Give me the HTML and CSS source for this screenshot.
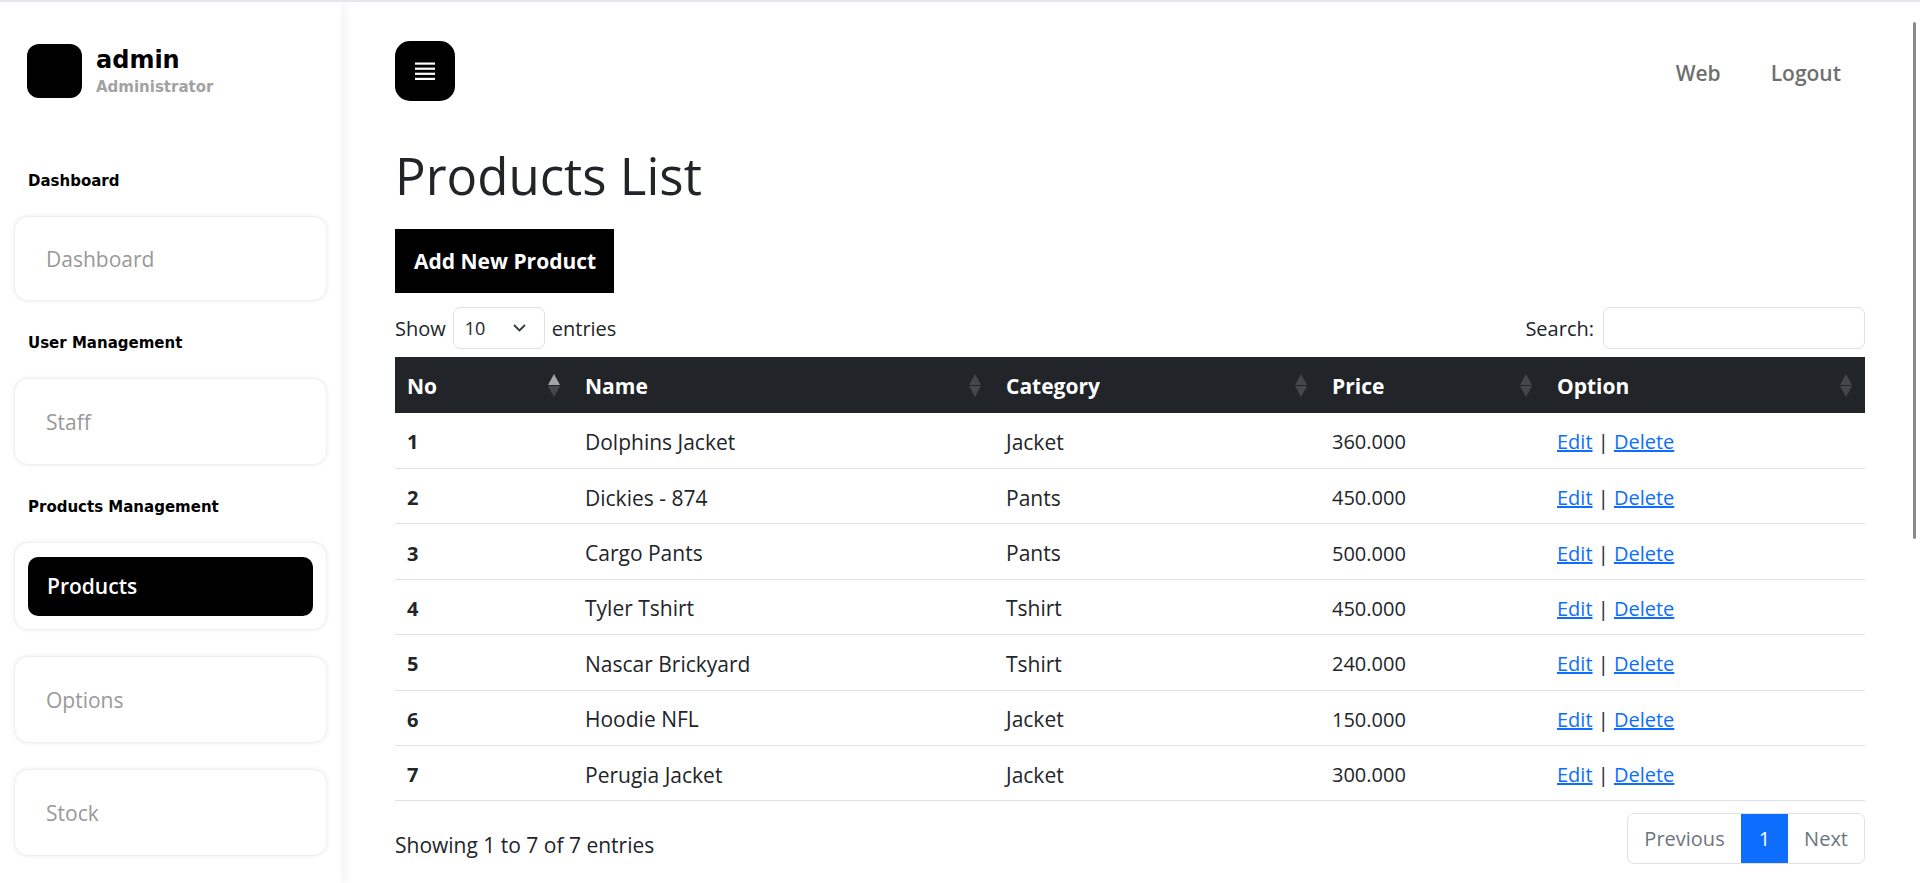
FILE: index.html
```html
<!DOCTYPE html>
<html lang="en">
<head>
<meta charset="utf-8">
<title>Products List</title>
<link rel="stylesheet" href="styles.css">
</head>
<body>
<aside class="sidebar">
  <div class="profile">
    <div class="avatar"></div>
    <div class="profile-text">
      <div class="name">admin</div>
      <div class="role">Administrator</div>
    </div>
  </div>

  <div class="menu-title first">Dashboard</div>
  <a class="menu-card tall" href="#">Dashboard</a>

  <div class="menu-title">User Management</div>
  <a class="menu-card" href="#">Staff</a>

  <div class="menu-title">Products Management</div>
  <div class="menu-card active-card"><a class="active-link" href="#">Products</a></div>
  <a class="menu-card" href="#">Options</a>
  <a class="menu-card" href="#">Stock</a>
</aside>

<main class="main">
  <header class="topbar">
    <button class="menu-btn" type="button" aria-label="Menu">
      <svg width="20" height="18" viewBox="0 0 20 18" aria-hidden="true">
        <rect x="0" y="0.5" width="20" height="2.2" fill="#fff"/>
        <rect x="0" y="5.6" width="20" height="2.2" fill="#fff"/>
        <rect x="0" y="10.7" width="20" height="2.2" fill="#fff"/>
        <rect x="0" y="15.8" width="20" height="2.2" fill="#fff"/>
      </svg>
    </button>
    <nav class="nav">
      <a href="#">Web</a>
      <a href="#">Logout</a>
    </nav>
  </header>

  <h1 class="page-title">Products List</h1>
  <div><a class="btn-add" href="#">Add New Product</a></div>

  <div class="dt-top">
    <div class="dt-length">
      <span>Show</span>
      <div class="select">
        <span>10</span>
        <svg width="13" height="8" viewBox="0 0 13 8" aria-hidden="true"><path d="M1 1l5.5 5.5L12 1" fill="none" stroke="#343a40" stroke-width="1.8"/></svg>
      </div>
      <span>entries</span>
    </div>
    <div class="dt-search">
      <span>Search:</span>
      <div class="input"></div>
    </div>
  </div>

  <table class="table">
    <colgroup>
      <col class="c-no"><col class="c-name"><col class="c-cat"><col class="c-price"><col class="c-opt">
    </colgroup>
    <thead>
      <tr>
        <th><div class="th-in">No<svg class="sort" width="12" height="23" viewBox="0 0 12 23"><polygon points="6,0 12,11 0,11" class="up-on"/><polygon points="0,12 12,12 6,23" class="off"/></svg></div></th>
        <th><div class="th-in">Name<svg class="sort" width="12" height="23" viewBox="0 0 12 23"><polygon points="6,0 12,11 0,11" class="off"/><polygon points="0,12 12,12 6,23" class="off"/></svg></div></th>
        <th><div class="th-in">Category<svg class="sort" width="12" height="23" viewBox="0 0 12 23"><polygon points="6,0 12,11 0,11" class="off"/><polygon points="0,12 12,12 6,23" class="off"/></svg></div></th>
        <th><div class="th-in">Price<svg class="sort" width="12" height="23" viewBox="0 0 12 23"><polygon points="6,0 12,11 0,11" class="off"/><polygon points="0,12 12,12 6,23" class="off"/></svg></div></th>
        <th><div class="th-in">Option<svg class="sort" width="12" height="23" viewBox="0 0 12 23"><polygon points="6,0 12,11 0,11" class="off"/><polygon points="0,12 12,12 6,23" class="off"/></svg></div></th>
      </tr>
    </thead>
    <tbody>
      <tr><td class="num">1</td><td>Dolphins Jacket</td><td>Jacket</td><td class="price">360.000</td><td class="opt"><a href="#">Edit</a> | <a href="#">Delete</a></td></tr>
      <tr><td class="num">2</td><td>Dickies - 874</td><td>Pants</td><td class="price">450.000</td><td class="opt"><a href="#">Edit</a> | <a href="#">Delete</a></td></tr>
      <tr><td class="num">3</td><td>Cargo Pants</td><td>Pants</td><td class="price">500.000</td><td class="opt"><a href="#">Edit</a> | <a href="#">Delete</a></td></tr>
      <tr><td class="num">4</td><td>Tyler Tshirt</td><td>Tshirt</td><td class="price">450.000</td><td class="opt"><a href="#">Edit</a> | <a href="#">Delete</a></td></tr>
      <tr><td class="num">5</td><td>Nascar Brickyard</td><td>Tshirt</td><td class="price">240.000</td><td class="opt"><a href="#">Edit</a> | <a href="#">Delete</a></td></tr>
      <tr><td class="num">6</td><td>Hoodie NFL</td><td>Jacket</td><td class="price">150.000</td><td class="opt"><a href="#">Edit</a> | <a href="#">Delete</a></td></tr>
      <tr><td class="num">7</td><td>Perugia Jacket</td><td>Jacket</td><td class="price">300.000</td><td class="opt"><a href="#">Edit</a> | <a href="#">Delete</a></td></tr>
    </tbody>
  </table>

  <div class="dt-bottom">
    <div class="dt-info">Showing 1 to 7 of 7 entries</div>
    <div class="pagination">
      <span class="page">Previous</span>
      <span class="page active">1</span>
      <span class="page">Next</span>
    </div>
  </div>
</main>

<div class="scroll-thumb"></div>
</body>
</html>
```
FILE: styles.css
```css
* { box-sizing: border-box; }

html, body { margin: 0; padding: 0; }

body {
  width: 1920px;
  height: 883px;
  overflow: hidden;
  border-top: 2px solid #e3e6ea;
  display: flex;
  font-family: "Open Sans", "Noto Sans", sans-serif;
  font-size: 20px;
  color: #212529;
  background: #fff;
}

/* ---------- sidebar ---------- */
.sidebar {
  width: 341px;
  flex: none;
  background: #fff;
  box-shadow: 3px 0 12px rgba(0, 0, 0, 0.06);
  padding: 42px 14px 0 14px;
  display: flex;
  flex-direction: column;
  position: relative;
  z-index: 1;
}

.profile {
  display: flex;
  gap: 14px;
  padding-left: 13px;
}

.avatar {
  width: 55px;
  height: 54px;
  border-radius: 12px;
  background: #000;
  flex: none;
}

.profile-text { padding-top: 3px; }

.name {
  font-family: "DejaVu Sans", sans-serif;
  font-weight: 700;
  font-size: 24px;
  line-height: 26px;
  color: #000;
}

.role {
  font-family: "DejaVu Sans", sans-serif;
  font-weight: 700;
  font-size: 15px;
  line-height: 18px;
  color: #a2a2a2;
  margin-top: 5px;
}

.menu-title {
  font-family: "DejaVu Sans", sans-serif;
  font-weight: 700;
  font-size: 15px;
  line-height: 20px;
  color: #000;
  padding-left: 14px;
  margin-top: 32px;
}

.menu-title.first { margin-top: 73px; }

.menu-card {
  height: 87px;
  margin-top: 25px;
  border-radius: 14px;
  border: 1px solid #f0f0f0;
  box-shadow: 0 0 4px rgba(0, 0, 0, 0.08);
  display: flex;
  align-items: center;
  padding-left: 31px;
  font-size: 21px;
  color: #999;
  text-decoration: none;
  background: #fff;
}

.menu-card.tall { height: 85px; margin-top: 25px; }
.menu-card + .menu-card { margin-top: 26px; }

.menu-card.active-card {
  height: 88px;
  padding: 14px 13px;
}

.active-link {
  flex: 1;
  height: 59px;
  border-radius: 10px;
  background: #000;
  color: #fff;
  display: flex;
  align-items: center;
  padding-left: 19px;
  text-decoration: none;
  font-weight: 600;
}

/* ---------- main ---------- */
.main {
  flex: 1;
  min-width: 0;
  padding: 39px 55px 0 54px;
}

.topbar {
  display: flex;
  justify-content: space-between;
  align-items: center;
  height: 60px;
}

.menu-btn {
  width: 60px;
  height: 60px;
  border-radius: 15px;
  background: #000;
  border: 0;
  padding: 0;
  display: flex;
  align-items: center;
  justify-content: center;
}

.nav {
  display: flex;
  gap: 2px;
  padding-top: 4px;
}

.nav a {
  padding: 0 24px;
  font-weight: 600;
  font-size: 21px;
  color: #6f6f6f;
  text-decoration: none;
}

.page-title {
  font-weight: 400;
  font-size: 51px;
  line-height: 62px;
  margin: 43px 0 23px;
  color: #212529;
}

.btn-add {
  display: inline-flex;
  align-items: center;
  height: 64px;
  padding: 0 18px 0 19px;
  background: #000;
  color: #fff;
  font-weight: 700;
  font-size: 21px;
  text-decoration: none;
}

.dt-top {
  display: flex;
  justify-content: space-between;
  align-items: center;
  margin-top: 14px;
  height: 42px;
}

.dt-length, .dt-search {
  display: flex;
  align-items: center;
}

.dt-length { gap: 7px; }
.dt-search { gap: 9px; }

.select {
  width: 92px;
  height: 42px;
  border: 1px solid #dee2e6;
  border-radius: 7px;
  display: flex;
  align-items: center;
  justify-content: space-between;
  padding: 0 18px 0 11px;
  font-size: 18px;
}

.input {
  width: 262px;
  height: 42px;
  border: 1px solid #dee2e6;
  border-radius: 7px;
}

/* ---------- table ---------- */
.table {
  width: 100%;
  margin-top: 8px;
  border-collapse: collapse;
  table-layout: fixed;
}

.c-no { width: 178px; }
.c-name { width: 421px; }
.c-cat { width: 326px; }
.c-price { width: 225px; }
.c-opt { width: 320px; }

.table th {
  background: #212529;
  color: #fff;
  height: 56px;
  padding: 1px 13px 0 12px;
  text-align: left;
  font-weight: 700;
  font-size: 21px;
}

.th-in {
  display: flex;
  align-items: center;
  justify-content: space-between;
}

.sort .off { fill: #44474c; }
.sort .up-on { fill: #a3a4a6; }

.table td {
  height: 55.43px;
  padding: 3px 12px 0;
  border-bottom: 1px solid #dee2e6;
  vertical-align: middle;
  font-size: 21px;
}

.table td.num { font-weight: 700; font-size: 20px; }
.table td.price, .table td.opt { font-size: 20px; }

.table a { color: #0d6efd; text-decoration: underline; }

.dt-bottom {
  display: flex;
  justify-content: space-between;
  align-items: flex-start;
  margin-top: 12px;
}

.dt-info {
  padding-top: 18px;
  line-height: 28px;
  font-size: 21px;
}

.pagination {
  display: flex;
  height: 51px;
  border: 1px solid #dee2e6;
  border-radius: 7px;
  overflow: hidden;
}

.page {
  display: flex;
  align-items: center;
  padding: 0 16px;
  color: #6c757d;
}

.page.active {
  background: #0d6efd;
  color: #fff;
  padding: 0 18px;
}

.scroll-thumb {
  position: fixed;
  right: 4px;
  top: 22px;
  width: 3px;
  height: 517px;
  background: #8a8a8a;
  border-radius: 2px;
}
```
